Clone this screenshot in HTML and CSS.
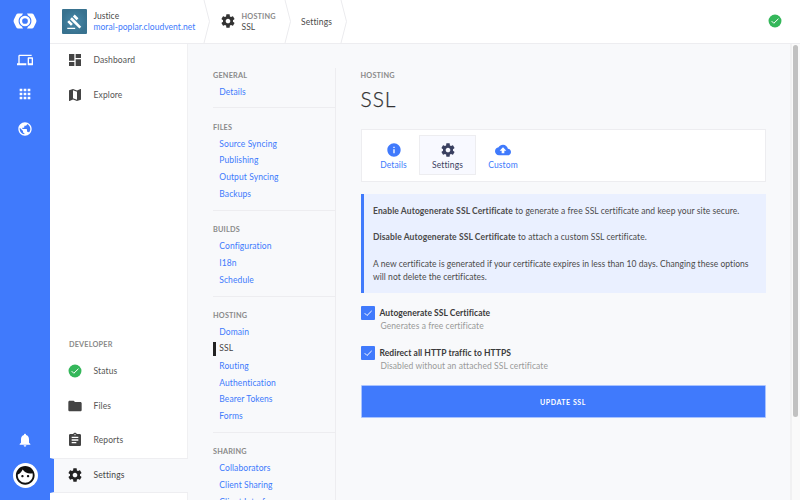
FILE: index.html
```html
<!DOCTYPE html>
<html lang="en">
<head>
<meta charset="utf-8">
<title>SSL Settings</title>
<link rel="stylesheet" href="styles.css">
</head>
<body>
<svg class="defs" width="0" height="0">
  <symbol id="gear" viewBox="0 0 24 24"><path d="M19.43 12.98c.04-.32.07-.64.07-.98s-.03-.66-.07-.98l2.11-1.65c.19-.15.24-.42.12-.64l-2-3.46c-.12-.22-.39-.3-.61-.22l-2.49 1c-.52-.4-1.08-.73-1.69-.98l-.38-2.65C14.46 2.18 14.25 2 14 2h-4c-.25 0-.46.18-.49.42l-.38 2.65c-.61.25-1.17.59-1.69.98l-2.49-1c-.23-.09-.49 0-.61.22l-2 3.46c-.13.22-.07.49.12.64l2.11 1.65c-.04.32-.07.65-.07.98s.03.66.07.98l-2.11 1.65c-.19.15-.24.42-.12.64l2 3.46c.12.22.39.3.61.22l2.49-1c.52.4 1.08.73 1.69.98l.38 2.65c.03.24.24.42.49.42h4c.25 0 .46-.18.49-.42l.38-2.65c.61-.25 1.17-.59 1.69-.98l2.49 1c.23.09.49 0 .61-.22l2-3.46c.12-.22.07-.49-.12-.64l-2.11-1.65zM12 15.5c-1.93 0-3.5-1.57-3.5-3.5s1.57-3.5 3.5-3.5 3.5 1.57 3.5 3.5-1.57 3.5-3.5 3.5z"/></symbol>
  <symbol id="status" viewBox="0 0 24 24"><circle cx="12" cy="12" r="9.7" fill="#34b75a"/><path d="M7 12.2l3.2 3.2L17.2 8.6" fill="none" stroke="#fff" stroke-width="1.5"/></symbol>
</svg>
<div class="app">
  <nav class="rail">
    <svg class="logo" viewBox="0 0 24 16"><path fill="#fff" d="M5.2.5H10L8.9 2.4A6.4 6.4 0 0 0 8.9 13.6L10 15.5H5.2Q3.8 15.500 3.200 14.200L.9 9.400Q.2 8 .9 6.600L3.200 1.800Q3.800.5 5.200.5ZM18.800.5H14l1.100 1.900a6.400 6.400 0 0 1 0 11.200L14 15.500h4.800q1.400 0 2-1.300l2.300-4.800q.7-1.400 0-2.800l-2.300-4.800Q20.200.5 18.800.5Z"/><circle cx="12" cy="8" r="4.100" fill="none" stroke="#fff" stroke-width="2.500"/></svg>
    <svg class="icon" viewBox="0 0 24 24"><path d="M4 6h18V4H4c-1.100 0-2 .9-2 2v11H0v3h14v-3H4V6zm19 2h-6c-.55 0-1 .45-1 1v10c0 .55.45 1 1 1h6c.55 0 1-.45 1-1V9c0-.55-.45-1-1-1zm-1 9h-4v-7h4v7z"/></svg>
    <svg class="icon" viewBox="0 0 24 24"><path d="M4 8h4V4H4v4zm6 12h4v-4h-4v4zm-6 0h4v-4H4v4zm0-6h4v-4H4v4zm6 0h4v-4h-4v4zm6-10v4h4V4h-4zm-6 4h4V4h-4v4zm6 6h4v-4h-4v4zm0 6h4v-4h-4v4z"/></svg>
    <svg class="icon" viewBox="0 0 24 24"><path d="M12 2C6.480 2 2 6.480 2 12s4.480 10 10 10 10-4.480 10-10S17.520 2 12 2zm-1 17.930c-3.950-.49-7-3.850-7-7.930 0-.62.08-1.210.21-1.790L9 15v1c0 1.100.9 2 2 2v1.930zm6.900-2.540c-.26-.81-1-1.390-1.900-1.390h-1v-3c0-.55-.45-1-1-1H8v-2h2c.55 0 1-.45 1-1V7h2c1.100 0 2-.9 2-2v-.41c2.930 1.190 5 4.060 5 7.410 0 2.080-.8 3.970-2.100 5.390z"/></svg>
    <svg class="icon bell" viewBox="0 0 24 24"><path d="M12 22c1.100 0 2-.9 2-2h-4c0 1.100.89 2 2 2zm6-6v-5c0-3.070-1.640-5.640-4.500-6.320V4c0-.83-.67-1.500-1.500-1.500s-1.500.67-1.500 1.500v.68C7.630 5.360 6 7.920 6 11v5l-2 2v1h16v-1l-2-2z"/></svg>
    <div class="avatar"><svg viewBox="0 0 24 24"><path d="M9 11.750c-.69 0-1.250.56-1.250 1.250s.56 1.250 1.250 1.250 1.250-.56 1.250-1.250-.56-1.250-1.250-1.250zm6 0c-.69 0-1.250.56-1.250 1.250s.56 1.250 1.250 1.250 1.250-.56 1.250-1.250-.56-1.250-1.250-1.250zM12 2C6.480 2 2 6.480 2 12s4.480 10 10 10 10-4.480 10-10S17.520 2 12 2zm0 18c-4.410 0-8-3.590-8-8 0-.29.02-.58.05-.86 2.360-1.050 4.230-2.980 5.210-5.370C11.070 8.330 14.050 10 17.420 10c.78 0 1.530-.09 2.250-.26.21.71.33 1.470.33 2.260 0 4.410-3.590 8-8 8z"/></svg></div>
  </nav>
  <div class="page">
    <header class="top">
      <div class="site">
        <svg class="thumb" viewBox="0 0 25 25"><defs><radialGradient id="tg"><stop offset="0" stop-color="#4889aa"/><stop offset="1" stop-color="#38728f"/></radialGradient></defs><rect width="25" height="25" fill="url(#tg)"/><g transform="translate(4.600 4.900) scale(.66)" fill="#fff"><path d="M1 21h12v2H1zM5.245 8.070l2.830-2.827 14.140 14.142-2.828 2.828zM12.317 1l5.657 5.656-2.830 2.830-5.654-5.660zM3.825 9.485l5.657 5.657-2.828 2.828-5.657-5.657z"/></g></svg>
        <div class="crumb-text"><span>Justice</span><a class="domain">moral-poplar.cloudvent.net</a></div>
      </div>
      <svg class="chev" viewBox="0 0 8 43"><path d="M1 0L6.500 21.500L1 43"/></svg>
      <div class="crumb"><svg class="icon" viewBox="0 0 24 24"><use href="#gear"/></svg><div class="crumb-text"><span class="caps">HOSTING</span><span class="ssl">SSL</span></div></div>
      <svg class="chev" viewBox="0 0 8 43"><path d="M1 0L6.500 21.500L1 43"/></svg>
      <div class="crumb last">Settings</div>
      <svg class="chev" viewBox="0 0 8 43"><path d="M1 0L6.500 21.500L1 43"/></svg>
      <svg class="icon ok"><use href="#status"/></svg>
    </header>
    <div class="body">
      <aside class="side">
        <a class="row"><svg class="icon" viewBox="0 0 24 24"><path d="M3 13h8V3H3v10zm0 8h8v-6H3v6zm10 0h8V11h-8v10zm0-18v6h8V3h-8z"/></svg><span>Dashboard</span></a>
        <a class="row"><svg class="icon" viewBox="0 0 24 24"><path d="M20.500 3l-.16.03L15 5.100 9 3 3.360 4.900c-.21.07-.36.25-.36.48V20.500c0 .28.22.5.5.5l.16-.03L9 18.900l6 2.100 5.640-1.900c.21-.07.36-.25.36-.48V3.500c0-.28-.22-.5-.5-.5zM15 19l-6-2.110V5l6 2.110V19z"/></svg><span>Explore</span></a>
        <div class="caps dev">DEVELOPER</div>
        <a class="row"><svg class="icon"><use href="#status"/></svg><span>Status</span></a>
        <a class="row"><svg class="icon" viewBox="0 0 24 24"><path d="M10 4H4c-1.100 0-1.990.9-1.990 2L2 18c0 1.100.9 2 2 2h16c1.100 0 2-.9 2-2V8c0-1.100-.9-2-2-2h-8l-2-2z"/></svg><span>Files</span></a>
        <a class="row"><svg class="icon" viewBox="0 0 24 24"><path d="M19 3h-4.180C14.400 1.840 13.300 1 12 1c-1.300 0-2.400.84-2.820 2H5c-1.100 0-2 .9-2 2v14c0 1.100.9 2 2 2h14c1.100 0 2-.9 2-2V5c0-1.100-.9-2-2-2zm-7 0c.55 0 1 .45 1 1s-.45 1-1 1-1-.45-1-1 .45-1 1-1zm2 14H7v-2h7v2zm3-4H7v-2h10v2zm0-4H7V7h10v2z"/></svg><span>Reports</span></a>
        <a class="row active"><svg class="icon" viewBox="0 0 24 24"><use href="#gear"/></svg><span>Settings</span></a>
      </aside>
      <div class="content">
        <nav class="menu">
          <section><h2 class="caps">GENERAL</h2><a>Details</a></section>
          <section><h2 class="caps">FILES</h2><a>Source Syncing</a><a>Publishing</a><a>Output Syncing</a><a>Backups</a></section>
          <section><h2 class="caps">BUILDS</h2><a>Configuration</a><a>I18n</a><a>Schedule</a></section>
          <section><h2 class="caps">HOSTING</h2><a>Domain</a><a class="current">SSL</a><a>Routing</a><a>Authentication</a><a>Bearer Tokens</a><a>Forms</a></section>
          <section><h2 class="caps">SHARING</h2><a>Collaborators</a><a>Client Sharing</a><a>Client Interface</a></section>
        </nav>
        <main class="main">
          <div class="caps">HOSTING</div>
          <h1>SSL</h1>
          <div class="tabs">
            <a><svg class="icon" viewBox="0 0 24 24"><path d="M12 2C6.480 2 2 6.480 2 12s4.480 10 10 10 10-4.480 10-10S17.520 2 12 2zm1 15h-2v-6h2v6zm0-8h-2V7h2v2z"/></svg><span>Details</span></a>
            <a class="on"><svg class="icon" viewBox="0 0 24 24"><use href="#gear"/></svg><span>Settings</span></a>
            <a><svg class="icon" viewBox="0 0 24 24"><path d="M19.350 10.040C18.670 6.590 15.640 4 12 4 9.110 4 6.600 5.640 5.350 8.040 2.340 8.360 0 10.910 0 14c0 3.310 2.690 6 6 6h13c2.760 0 5-2.240 5-5 0-2.640-2.050-4.780-4.650-4.960zM14 13v4h-4v-4H7l5-5 5 5h-3z"/></svg><span>Custom</span></a>
          </div>
          <div class="note">
            <p><b>Enable Autogenerate SSL Certificate</b> to generate a free SSL certificate and keep your site secure.</p>
            <p><b>Disable Autogenerate SSL Certificate</b> to attach a custom SSL certificate.</p>
            <p class="expiry">A new certificate is generated if your certificate expires in less than 10 days. Changing these options<br>will not delete the certificates.</p>
          </div>
          <div class="option"><svg class="box" viewBox="0 0 14 14"><path d="M3.700 7.200l2.300 2.300 4.700-4.600"/></svg><div><b>Autogenerate SSL Certificate</b><small>Generates a free certificate</small></div></div>
          <div class="option"><svg class="box" viewBox="0 0 14 14"><path d="M3.700 7.200l2.300 2.300 4.700-4.600"/></svg><div><b>Redirect all HTTP traffic to HTTPS</b><small>Disabled without an attached SSL certificate</small></div></div>
          <button class="update">UPDATE SSL</button>
        </main>
        <div class="scroll"><div class="thumb-bar"></div></div>
      </div>
    </div>
  </div>
</div>
</body>
</html>
```
FILE: styles.css
```css
* { box-sizing: border-box; }
body { margin: 0; width: 800px; height: 500px; overflow: hidden; font-family: Lato, sans-serif; font-size: 8.5px; letter-spacing: .05px; color: #4a4a4a; background: #f8f9fb; }
h1, h2, p { margin: 0; font-weight: 400; }
.defs { display: none; }
.icon { display: block; flex: none; width: 16px; height: 16px; fill: currentColor; }
.caps { font-size: 7.3px; font-weight: 700; letter-spacing: .18px; color: #8a8a8a; }

.app { display: flex; height: 500px; }
.rail { flex: none; width: 50px; background: #407afc; color: #fff; display: flex; flex-direction: column; align-items: center; padding: 13px 0 12px; }
.logo { width: 24px; height: 16px; flex: none; margin: 0 1px 23px 0; }
.rail .icon { margin-bottom: 18.300px; }
.rail .bell { margin-top: auto; margin-bottom: 15.500px; }
.avatar { width: 25px; height: 25px; flex: none; border-radius: 50%; background: #fff; display: flex; align-items: center; justify-content: center; }
.avatar svg { width: 22.500px; height: 22.500px; fill: #111; }

.page { flex: 1; min-width: 0; display: flex; flex-direction: column; }
.top { flex: none; height: 44px; padding-bottom: 1px; background: #fff; border-bottom: 1px solid #ededf0; display: flex; align-items: center; }
.site { display: flex; align-items: center; width: 153px; padding-left: 12.400px; }
.thumb { width: 25px; height: 25px; margin-right: 6px; flex: none; border-radius: 1px; }
.crumb-text { display: flex; flex-direction: column; line-height: 11px; white-space: nowrap; padding-top: 1px; }
.domain { color: #407afc; }
.chev { width: 8px; height: 43px; flex: none; }
.chev path { fill: none; stroke: #ebebee; stroke-width: 1; }
.crumb { display: flex; align-items: center; width: 73px; padding-left: 9px; }
.crumb .icon { margin-right: 5.500px; color: #333; }
.crumb.last { width: 48px; padding-top: 1px; letter-spacing: .12px; }
.ok { margin: 0 17px 0 auto; }

.body { flex: 1; min-height: 0; display: flex; }
.side { flex: none; width: 138px; background: #fff; border-right: 1px solid #f0f0f2; display: flex; flex-direction: column; padding-bottom: 7.500px; }
.row { flex: none; height: 34.800px; display: flex; align-items: center; padding-left: 17px; color: #555; letter-spacing: .12px; }
.row .icon { margin-right: 10.500px; color: #444; }
.side .row:first-child { margin-top: -1px; }
.dev { margin: auto 0 0 19px; line-height: 16px; }
.row.active { width: 138px; background: #f8f9fb; border: solid #eeeef1; border-width: 1px 0; padding-left: 13px; color: #444; border-left: 4px solid #407afc; }
.row.active .icon { color: #222; }

.content { flex: 1; min-width: 0; display: flex; }
.menu { flex: none; width: 123px; margin: 23.500px 0 0 25px; border-right: 1px solid #ededf0; color: #407afc; letter-spacing: .09px; }
.menu section { padding-bottom: 7px; border-bottom: 1px solid #ededf0; margin-bottom: 11.150px; }
.menu h2 { line-height: 16px; }
.menu a { display: block; height: 16.875px; line-height: 16.875px; padding-left: 6.300px; white-space: nowrap; }
.menu .current { color: #444; height: 13.875px; line-height: 13.875px; margin: 1.500px 0; border-left: 3px solid #222; padding-left: 3.300px; }
.main { flex: none; width: 405px; margin: 23.500px 0 0 24.500px; }
.main > .caps { line-height: 16px; }
h1 { font-size: 21px; line-height: 26px; letter-spacing: .9px; font-weight: 300; color: #333; -webkit-text-stroke: .25px #333; margin: 2px 0 17px; }
.tabs { height: 53px; background: #fff; border: 1px solid #ededf0; display: flex; align-items: center; padding-left: 4px; color: #407afc; }
.tabs a { height: 40px; width: 56px; border: 1px solid transparent; display: flex; flex-direction: column; align-items: center; padding-top: 6px; line-height: 14px; letter-spacing: .12px; }
.tabs .on { background: #f8f9ff; border-color: #ededf0; color: #3a4060; width: 57px; margin: 0 -1px 0 -2.500px; }
.note { height: 99px; margin-top: 12.500px; background: #eaf0ff; border-left: 3px solid #407afc; padding: 10.800px 0 0 9.500px; line-height: 13.200px; letter-spacing: .07px; white-space: nowrap; }
.note b { letter-spacing: .1px; }
.note p { margin-bottom: 13.200px; }
.note .expiry { letter-spacing: .04px; }
.option { display: flex; height: 27px; margin-top: 13px; }
.box { width: 14px; height: 14px; flex: none; background: #407afc; border-radius: 1px; margin-right: 5px; margin-top: -.5px; }
.box path { fill: none; stroke: #fff; stroke-width: 1; }
.option b, .option small { display: block; line-height: 13.500px; position: relative; top: .6px; }
.option b { color: #3a3a3a; }
.option small { font-size: 8.500px; letter-spacing: .07px; color: #999; padding-left: 1px; }
.update { display: block; width: 405px; height: 33px; margin-top: 12px; padding: 1px 0 0; background: #407afc; border: 1px solid #a9c3ff; border-radius: 1px; color: #fff; font: 700 7px Lato, sans-serif; letter-spacing: .55px; }
.scroll { width: 10px; margin-left: auto; background: #fafafa; border-left: 2px solid #f1f1f2; padding: 1px 0 0 1px; }
.thumb-bar { width: 5px; height: 372px; border-radius: 3px; background: #c1c1c1; }
```
